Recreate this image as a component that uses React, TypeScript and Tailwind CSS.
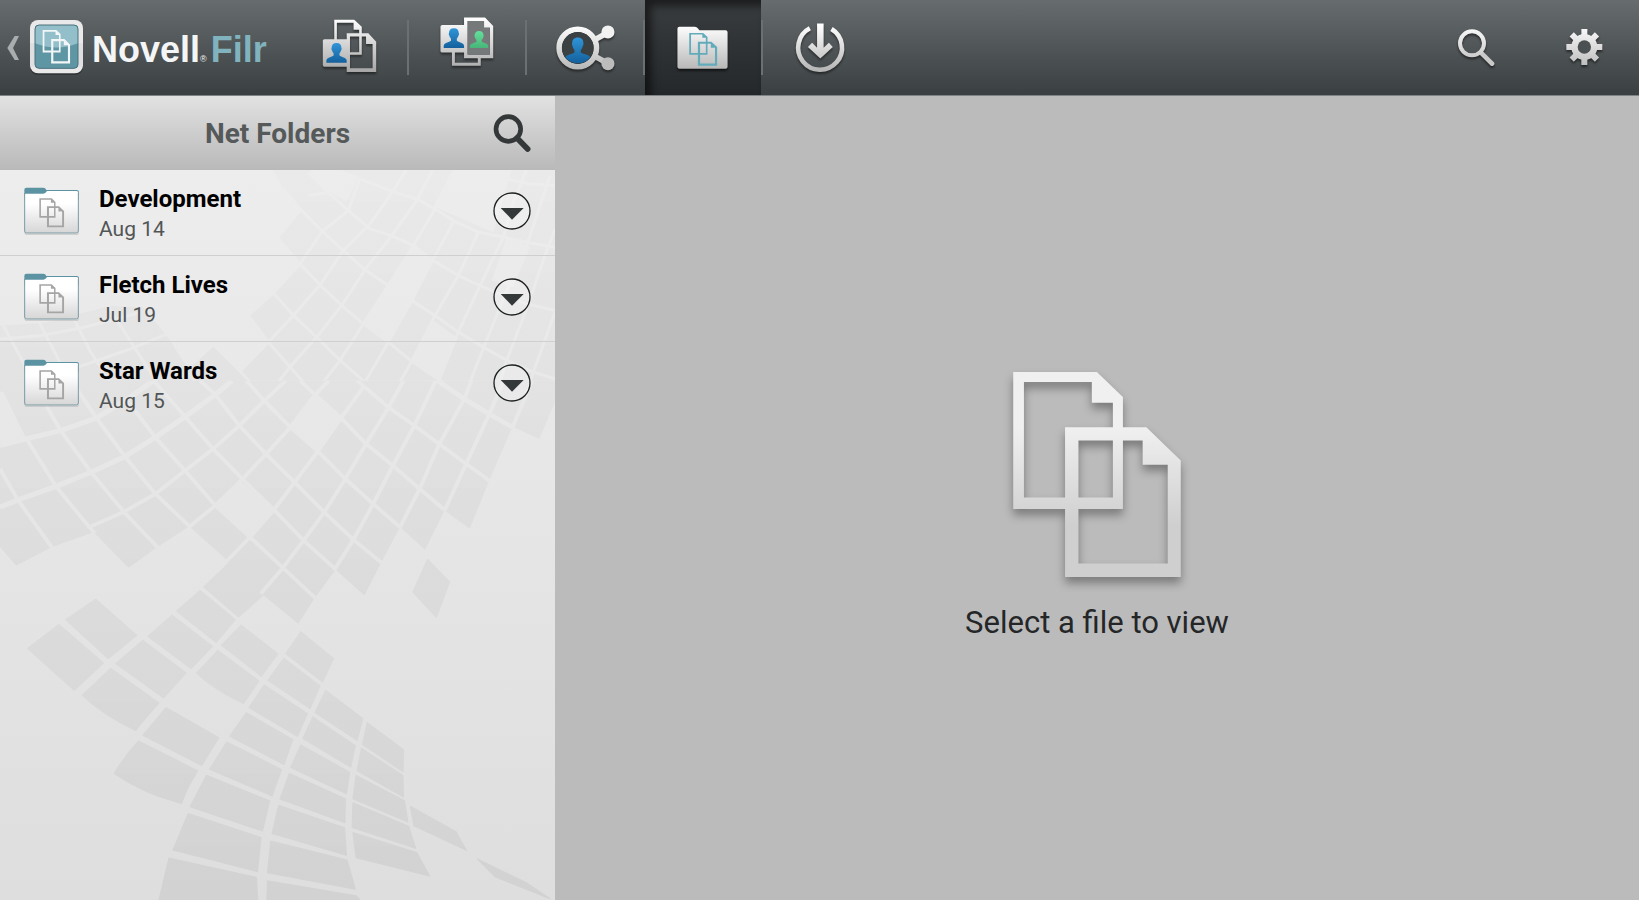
import type { ReactNode } from 'react'

const folders = [
  { name: 'Development', date: 'Aug 14' },
  { name: 'Fletch Lives', date: 'Jul 19' },
  { name: 'Star Wards', date: 'Aug 15' },
]

// Two overlapping pages, drawn in a 501 x 613 box
function PagesShape({ fill }: { fill: string }) {
  return (
    <g fill={fill} fillRule="evenodd">
      <path d="M0 0H250L328 75V410H0ZM32 30V375H298V92H235V30Z" />
      <path d="M155 165H398L501 265V613H155ZM195 205V573H462V277H387V205Z" />
    </g>
  )
}

function Person({ x, y, fill }: { x: number; y: number; fill: string }) {
  return (
    <path
      transform={`translate(${x} ${y})`}
      fill={fill}
      d="M31 0C41 0 46 6 46 15C47 17 47 20 45 22C44 27 42 29 40 31V38C45 43 62 43 62 54V60H0V54C0 43 17 43 22 38V31C20 29 18 27 17 22C15 20 15 17 16 15C16 6 21 0 31 0Z"
    />
  )
}

function Gradients() {
  return (
    <svg className="absolute h-0 w-0" aria-hidden="true">
      <defs>
        <linearGradient id="silver" gradientUnits="userSpaceOnUse" x1="0" y1="55" x2="0" y2="220">
          <stop offset="0" stopColor="#ffffff" />
          <stop offset="1" stopColor="#a4a4a4" />
        </linearGradient>
        <linearGradient id="silverSoft" gradientUnits="userSpaceOnUse" x1="0" y1="75" x2="0" y2="215">
          <stop offset="0" stopColor="#ffffff" />
          <stop offset="1" stopColor="#b4b4b4" />
        </linearGradient>
        <linearGradient id="blue" x1="0" y1="0" x2="0" y2="1">
          <stop offset="0" stopColor="#2f95d8" />
          <stop offset="1" stopColor="#14609c" />
        </linearGradient>
        <linearGradient id="green" x1="0" y1="0" x2="0" y2="1">
          <stop offset="0" stopColor="#63e09b" />
          <stop offset="1" stopColor="#48b578" />
        </linearGradient>
        <linearGradient id="paper" x1="0" y1="0" x2="0" y2="1">
          <stop offset="0.3" stopColor="#ffffff" />
          <stop offset="1" stopColor="#d6d6d6" />
        </linearGradient>
        <linearGradient id="pageGrey" gradientUnits="userSpaceOnUse" x1="0" y1="165" x2="0" y2="460">
          <stop offset="0" stopColor="#f0f0f0" />
          <stop offset="1" stopColor="#cfcfcf" />
        </linearGradient>
      </defs>
    </svg>
  )
}

function BrandMark() {
  return (
    <svg className="h-[95px] w-[92px] shrink-0" viewBox="0 0 276 285" aria-hidden="true">
      <path d="M44 108H57L39 144L57 180H44L22 144Z" fill="#a9adae" />
      <rect x="90" y="64" width="159" height="161" rx="24" fill="#24292b" opacity="0.6" />
      <rect x="90" y="60" width="159" height="160" rx="24" fill="#e9e9ea" />
      <rect x="90" y="130" width="159" height="70" fill="#d5d6d8" opacity="0.5" />
      <rect x="105" y="75" width="129" height="130" rx="12" fill="#5f96a4" />
      <path d="M105 130V87Q105 75 117 75H222Q234 75 234 87V130Q170 155 105 130Z" fill="#92bfca" />
      <rect x="105" y="75" width="129" height="130" rx="12" fill="none" stroke="#48707c" strokeWidth="3" />
      <g transform="translate(128 90) scale(.164)">
        <PagesShape fill="#f2f6f7" />
      </g>
    </svg>
  )
}

function MyFilesIcon() {
  return (
    <svg className="h-full w-full drop-shadow-[0_2px_1px_rgba(0,0,0,0.45)]" viewBox="-30 0 354 285" aria-hidden="true">
      <g fill="url(#silver)" fillRule="evenodd">
        <path d="M102 58H163L186 79V165H102ZM110 67V157H178V88H161V67Z" />
        <path d="M140 99H206L230 125V217H140ZM150 109V206H219V132H199V109Z" />
        <path d="M72 117H141V201H72Q67 201 67 196V122Q67 117 72 117Z" />
      </g>
      <Person x={78} y={129} fill="url(#blue)" />
    </svg>
  )
}

function SharedWithMeIcon() {
  return (
    <svg className="h-full w-full drop-shadow-[0_2px_1px_rgba(0,0,0,0.45)]" viewBox="324 0 354 285" aria-hidden="true">
      <g fill="url(#silver)" fillRule="evenodd">
        <path d="M455 155H464V189H534V170H543V198H455Z" />
        <path d="M426 74H495V158H426Q420 158 420 153V79Q420 74 426 74Z" />
        <path d="M492 51H556L581 77V175H492ZM503 62V164H571V82H553V62Z" />
      </g>
      <path d="M503 62H553V82H571V164H503Z" fill="#75797a" />
      <Person x={430} y={84} fill="url(#blue)" />
      <g transform="translate(510 92) scale(.9 .87)">
        <Person x={0} y={0} fill="url(#green)" />
      </g>
    </svg>
  )
}

function SharedByMeIcon() {
  return (
    <svg className="h-full w-full drop-shadow-[0_2px_1px_rgba(0,0,0,0.45)]" viewBox="-12 0 354 285" aria-hidden="true">
      <g stroke="url(#silverSoft)" fill="none">
        <path d="M193 120L236 96M193 168L236 192" strokeWidth="17" />
        <circle cx="143" cy="144" r="57" strokeWidth="17" />
      </g>
      <circle cx="235" cy="95" r="20" fill="#f2f2f2" />
      <circle cx="235" cy="192" r="20" fill="#bcbcbc" />
      <circle cx="143" cy="144" r="48" fill="#3b4043" />
      <path
        fill="url(#blue)"
        d="M143 112C155 112 160 119 160 129C161 132 160 136 158 138C157 144 155 147 152 150V158C158 163 174 163 181 172A48 48 0 0 1 105 172C112 163 128 163 133 158V150C130 147 128 144 127 138C125 136 125 132 126 129C126 119 131 112 143 112Z"
      />
    </svg>
  )
}

function NetFoldersIcon() {
  return (
    <svg className="h-full w-full drop-shadow-[0_2px_1px_rgba(0,0,0,0.6)]" viewBox="342 0 354 285" aria-hidden="true">
      <path
        fill="url(#silverSoft)"
        d="M447 79H494Q500 79 503 84L508 90H588Q594 90 594 96V201Q594 207 588 207H447Q441 207 441 201V85Q441 79 447 79Z"
      />
      <g transform="translate(477 98) scale(.17 .163)">
        <PagesShape fill="#62abba" />
      </g>
    </svg>
  )
}

function DownloadsIcon() {
  return (
    <svg className="h-full w-full drop-shadow-[0_2px_1px_rgba(0,0,0,0.45)]" viewBox="696 0 354 285" aria-hidden="true">
      <path d="M839 84A67 67 0 1 0 905 86" fill="none" stroke="url(#silverSoft)" strokeWidth="14" />
      <path fill="url(#silverSoft)" d="M861 69H881V143L897 128L909 141L871 176L833 141L846 128L861 143Z" />
    </svg>
  )
}

function SearchIcon() {
  return (
    <svg className="h-full w-full drop-shadow-[0_2px_1px_rgba(0,0,0,0.5)]" viewBox="-33 0 330 285" aria-hidden="true">
      <path d="M152 157L186 191" stroke="#c9c9c9" strokeWidth="14" strokeLinecap="round" />
      <circle cx="126" cy="130" r="36" fill="none" stroke="url(#silverSoft)" strokeWidth="12" />
    </svg>
  )
}

function SettingsIcon() {
  return (
    <svg className="h-full w-full drop-shadow-[0_2px_1px_rgba(0,0,0,0.5)]" viewBox="297 0 330 285" aria-hidden="true">
      <g stroke="url(#silverSoft)" fill="none">
        <path
          strokeWidth="18"
          d="M463.1 87L463 195M409 141.1L517 141M425 103L501 179M501 103L425 179"
        />
        <circle cx="463" cy="141" r="29" strokeWidth="20" />
      </g>
      <circle cx="463" cy="141" r="20" fill="#4b5153" />
    </svg>
  )
}

function FolderIcon() {
  return (
    <svg className="h-[48px] w-[55px] shrink-0" viewBox="72 292 165 144" aria-hidden="true">
      <path d="M74 429Q74 435 82 435H228Q236 435 236 429" fill="none" stroke="#b9b9b9" strokeWidth="2" />
      <path d="M73 300Q73 294 79 294H130Q136 294 139 301H230Q237 301 237 308V330H73Z" fill="#5c93a3" />
      <path d="M74 314Q74 312 77 312H130Q136 312 141 304H229Q235 304 235 310V424Q235 430 229 430H80Q74 430 74 424Z" fill="url(#paper)" />
      <path d="M74 310V424Q74 430 80 430H229Q235 430 235 424V310" fill="none" stroke="#7b99a3" strokeWidth="3" />
      <g transform="translate(118 326) scale(.148 .142)">
        <PagesShape fill="#a5a5a5" />
      </g>
    </svg>
  )
}

// Faint tiled pattern behind the folder list
function Mosaic() {
  return (
    <svg
      className="absolute inset-0 h-full w-full"
      viewBox="0 0 555 731"
      preserveAspectRatio="none"
      aria-hidden="true"
    >
      <defs>
        <linearGradient id="fade" x1="0" y1="0" x2="0" y2="1">
          <stop offset="0" stopColor="#000" stopOpacity="0.012" />
          <stop offset="0.5" stopColor="#000" stopOpacity="0.032" />
          <stop offset="1" stopColor="#000" stopOpacity="0.052" />
        </linearGradient>
        <mask id="tiles" maskUnits="userSpaceOnUse" x="0" y="0" width="555" height="731">
          <svg x="0" y="0" width="555" height="211" viewBox="0 3 1665 633" preserveAspectRatio="none">
            <g transform="translate(660 0)">
              <path
                fill="#fff"
                d="M160 3H1005V636H30L60 608L145 520L85 440L240 285L175 210L245 125L190 60Z"
              />
              <g fill="#000">
                <path d="M265 0H345L415 25L380 98L325 66Z" />
                <path d="M580 230L640 275L570 400L505 520L430 465L505 350Z" />
                <path d="M640 455L708 505L655 636L578 575Z" />
                <path d="M700 0H875L820 190L640 112Z" />
                <path d="M860 205L930 232L880 355L815 335Z" />
              </g>
              <g fill="none" stroke="#000" strokeWidth="9">
                <path d="M190 60L245 125L307 187L370 245L435 303L505 350L645 440L715 490L790 535L860 575L940 610L1005 630" />
                <path d="M175 210L240 285L300 348L365 410L430 465L505 520L575 578L655 632L680 650" />
                <path d="M85 372H160L220 440L290 505L360 575L435 640" />
                <path d="M85 440L145 520L210 595L250 640" />
                <path d="M60 608L90 640" />
                <path d="M265 10L325 70L385 125L450 180L515 200L580 230L640 275L715 320L780 350L850 380L920 405L1005 425" />
                <path d="M345 0L415 28L525 70L590 90L645 120L700 155L775 190L855 205L920 220L1005 235" />
                <path d="M860 30L930 45L1005 50" />
                <path d="M265 80L325 70L350 0M85 440L160 372L240 285L307 187L385 125L420 28" />
                <path d="M30 640L60 608L145 520L220 440L300 348L370 245L450 165L520 65L560 0" />
                <path d="M175 640L210 595L290 505L365 410L435 303L515 200L590 95L640 0" />
                <path d="M310 640L360 575L430 465L505 350L580 230L645 120L700 10" />
                <path d="M435 640L505 520L570 405L640 270L700 160" />
                <path d="M540 640L575 578L645 440L715 320L775 190" />
                <path d="M655 640L715 490L780 350L850 205L880 100L920 0" />
                <path d="M750 640L790 540L850 390L920 230L990 20" />
                <path d="M840 640L860 575L920 420L975 260L1005 180" />
                <path d="M930 640L940 610L1005 430" />
              </g>
            </g>
            <g transform="translate(0 366)">
              <path fill="#fff" d="M0 105L140 95L330 45L430 50L500 135L565 235L640 168L718 245L745 275H0Z" />
              <g fill="none" stroke="#000" strokeWidth="9">
                <path d="M0 145L120 135L250 110L420 65" />
                <path d="M0 290L70 275L170 250L260 220L390 175L500 130" />
                <path d="M10 105L70 215L100 290M115 90L180 215L215 290M215 70L270 180L340 290M320 40L400 165L480 290M560 240L600 290" />
              </g>
            </g>
          </svg>
          <svg x="0" y="211" width="555" height="520" viewBox="0 0 1554 1560" preserveAspectRatio="none">
            <path
              fill="#fff"
              d="M0 0H1554V65L1510 175L1435 138L1370 300L1315 445L1245 390L1190 508L1120 440L1068 545L1020 645L940 568L883 650L835 730L738 645L668 712L568 620L638 548L628 532L530 438L440 500L360 562L262 455L145 500L45 555L0 500V190L72 170L10 35L0 32Z"
            />
            <g fill="#000">
              <path d="M675 303L768 390L700 470L603 375Z" />
              <path d="M880 45L957 112L892 215L813 140Z" />
            </g>
            <g fill="none" stroke="#000" strokeWidth="11">
              <path strokeWidth="15" d="M0 195L72 175L170 150L270 112L350 60L430 0" />
              <path strokeWidth="15" d="M0 380L50 358L155 318L255 275L350 228L435 170L518 108L603 42L650 0" />
              <path d="M250 440L345 395L435 340L518 270L597 205L670 135L740 60L800 0" />
              <path d="M530 438L603 375L675 300L745 220L813 140L880 45L920 0" />
              <path d="M632 545L700 470L767 388L825 305L890 212L955 112L1020 15" />
              <path d="M730 640L792 562L850 480L908 395L967 295L1025 190L1088 80L1130 0" />
              <path d="M935 570L988 480L1045 370L1100 255L1160 135L1220 0" />
              <path d="M1120 440L1175 325L1230 190L1300 55L1320 0" />
              <path d="M1245 390L1305 250L1370 100L1410 0" />
              <path d="M1435 140L1490 0" />
              <path d="M0 265L50 358L145 500" />
              <path d="M72 170L157 318L250 440L266 458" />
              <path d="M105 30L170 150L255 275L350 398L445 505" />
              <path d="M200 0L270 112L350 228L435 340L535 442" />
              <path d="M350 50L435 170L518 270L603 375L700 470L792 562L885 655" />
              <path d="M430 0L518 108L597 205L680 297L767 388L850 480L938 565" />
              <path d="M560 0L603 42L670 135L745 220L825 305L908 395L990 478L1070 548" />
              <path d="M690 0L740 60L813 140L890 212L967 295L1045 370L1120 440" />
              <path d="M840 0L880 40L955 112L1025 190L1100 255L1175 325L1245 388" />
              <path d="M1000 0L1088 80L1160 135L1230 190L1305 250L1370 300" />
              <path strokeWidth="14" d="M1225 0L1300 55L1370 100L1435 140" />
            </g>
            <g fill="#fff" stroke="#fff" strokeWidth="3" strokeLinejoin="round">
              <path d="M1197 536L1259 605L1222 711L1156 635Z" />
            </g>
            <g transform="translate(0 750)" fill="#fff" stroke="#fff" strokeWidth="3" strokeLinejoin="round">
              <path d="M165 -18L290 98L208 180L77 54ZM268 -94L383 15L303 85L184 -32Z" />
              <path d="M482 -46L595 48L535 115L414 18ZM560 -120L659 -32L605 36L494 -58Z" />
              <path d="M400 30L521 128L458 203L324 100ZM310 114L445 218Q402 270 380 301Q290 255 230 195Z" />
              <path d="M675 -16L778 70L732 138L620 45ZM610 60L725 152L682 220Q600 180 550 128Z" />
              <path d="M842 4L934 85L903 155L800 70ZM795 84L896 167L868 235L750 150Z" />
              <path d="M740 164L861 250L833 318L697 232ZM912 180L1016 265L1000 330L882 247Z" />
              <path d="M465 232L613 322L565 406L400 315ZM690 247L820 328L795 403L643 318Z" />
              <path d="M876 260L995 346L982 411L848 325ZM1028 277L1130 358L1129 425L1015 343Z" />
              <path d="M388 332L554 422Q525 470 508 520Q400 490 320 430Q350 375 388 332Z" />
              <path d="M635 335L788 418L762 498L587 417ZM842 344L979 426L970 491L814 412Z" />
              <path d="M1012 354L1128 436L1130 501L1000 422ZM578 435L755 512L735 603L532 530Z" />
              <path d="M810 430L967 506L966 578L784 507ZM997 436L1133 512L1142 576L988 506Z" />
              <path d="M527 550L731 622L721 725L484 660ZM780 525L965 593L970 676L762 610Z" />
              <path d="M988 518L1144 588L1164 655L986 592ZM758 633L972 690L995 778L749 728Z" />
              <path d="M988 607L1167 667L1203 738L997 683ZM473 684L718 742L722 815H444Z" />
              <path d="M749 752L997 797L1012 815H747ZM1149 528L1277 605L1306 661L1159 587Z" />
              <path d="M1337 687L1474 758L1540 806L1386 740Z" />
            </g>
          </svg>
        </mask>
      </defs>
      <rect width="555" height="731" fill="url(#fade)" mask="url(#tiles)" />
    </svg>
  )
}

function Tab({ label, active, children }: { label: string; active?: boolean; children: ReactNode }) {
  return (
    <div className="flex items-center">
      <button
        type="button"
        aria-label={label}
        aria-current={active ? 'page' : undefined}
        className={
          active
            ? 'h-[95px] w-[116px] bg-linear-to-b from-[#3a3d3f] to-[#24282a] shadow-[inset_6px_6px_8px_rgba(0,0,0,0.55)]'
            : 'h-[95px] w-[116px]'
        }
      >
        {children}
      </button>
      <span className="h-[55px] w-[2px] bg-[#6b7072]" />
    </div>
  )
}

function Header() {
  return (
    <header className="flex h-[96px] shrink-0 items-start justify-between border-b border-[#808384] bg-linear-to-b from-[#676c6e] to-[#3a3f41]">
      <nav className="flex">
        <a href="#" className="flex w-[291px] items-center font-['Liberation_Sans',sans-serif] text-[36px] font-bold text-[#f4f5f6]">
          <BrandMark />
          <span className="flex items-baseline pt-1">
            <span>Novell</span>
            <span className="mr-1 text-[9px] leading-none font-normal">®</span>
            <span className="text-[#81b3bf]">Filr</span>
          </span>
        </a>
        <Tab label="My Files">
          <MyFilesIcon />
        </Tab>
        <Tab label="Shared with Me">
          <SharedWithMeIcon />
        </Tab>
        <Tab label="Shared by Me">
          <SharedByMeIcon />
        </Tab>
        <Tab label="Net Folders" active>
          <NetFoldersIcon />
        </Tab>
        <button type="button" aria-label="Downloads" className="h-[95px] w-[116px]">
          <DownloadsIcon />
        </button>
      </nav>
      <div className="flex">
        <button type="button" aria-label="Search" className="h-[95px] w-[110px]">
          <SearchIcon />
        </button>
        <button type="button" aria-label="Settings" className="h-[95px] w-[110px]">
          <SettingsIcon />
        </button>
      </div>
    </header>
  )
}

function Sidebar() {
  return (
    <aside className="flex flex-col">
      <div className="grid h-[74px] shrink-0 grid-cols-[1fr_auto_1fr] items-center bg-linear-to-b from-[#e2e2e2] to-[#b9b9b9] px-6">
        <h1 className="col-start-2 pt-[2px] text-[28px] font-bold text-[#55595a]">Net Folders</h1>
        <button type="button" aria-label="Search folders" className="justify-self-end">
          <svg className="h-[38px] w-[38px]" viewBox="282 71 114 114" aria-hidden="true">
            <circle cx="328" cy="116" r="37" fill="none" stroke="#343839" strokeWidth="14" />
            <path d="M354 143L386 176" stroke="#343839" strokeWidth="17" strokeLinecap="round" />
          </svg>
        </button>
      </div>
      <div className="relative grow bg-linear-to-b from-[#ededed] to-[#dedede]">
        <Mosaic />
        <ul className="relative">
          {folders.map((folder) => (
            <li
              key={folder.name}
              className="flex h-[86px] items-center border-b border-[#cfcfcf] px-6 pb-1 last:border-transparent"
            >
              <button type="button" className="flex grow items-center gap-5 text-left">
                <FolderIcon />
                <span className="flex flex-col pt-1">
                  <span className="text-[24px] leading-[32px] font-bold text-black">{folder.name}</span>
                  <span className="text-[21px] leading-[28px] text-[#525556]">{folder.date}</span>
                </span>
              </button>
              <button type="button" aria-label={`Actions for ${folder.name}`}>
                <svg className="h-[38px] w-[38px]" viewBox="279 305 114 114" aria-hidden="true">
                  <circle cx="336" cy="362" r="54" fill="#fff" fillOpacity="0.25" stroke="#1d2021" strokeWidth="4" />
                  <path d="M302 353H371L336 388Z" fill="#343839" />
                </svg>
              </button>
            </li>
          ))}
        </ul>
      </div>
    </aside>
  )
}

export default function App() {
  return (
    <div className="flex min-h-screen flex-col font-[Roboto,sans-serif]">
      <Gradients />
      <Header />
      <div className="grid grow grid-cols-[555fr_1084fr]">
        <Sidebar />
        <main className="flex flex-col items-center justify-center bg-[#bbbbbb] pt-4">
          <svg
            className="h-[205px] w-[168px] overflow-visible drop-shadow-[0_6px_5px_rgba(0,0,0,0.35)]"
            viewBox="0 0 501 613"
            aria-hidden="true"
          >
            <PagesShape fill="url(#pageGrey)" />
          </svg>
          <p className="mt-7 text-[31px] leading-[36px] text-[#242627]">Select a file to view</p>
        </main>
      </div>
    </div>
  )
}
